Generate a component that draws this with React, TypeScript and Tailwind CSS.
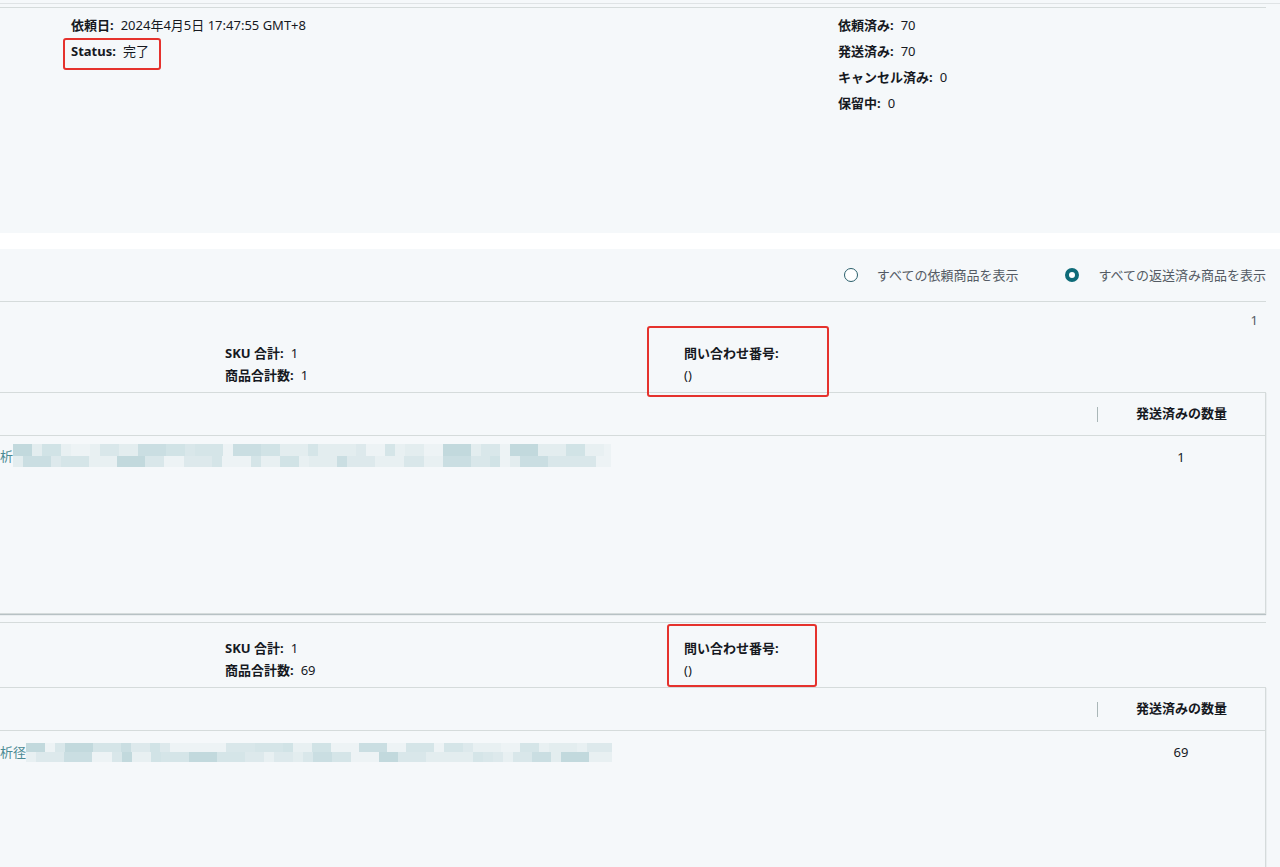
import React from "react";

const PALETTE = ["#d9e7ea", "#cadee2", "#e3edef", "#edf3f5", "#d1e3e6", "#c2d9dd", "#dde9ec", "#e8f0f2", "#d5e5e8"];

function seeded(seed: number) {
  let s = seed;
  return () => {
    s = (s * 9301 + 49297) % 233280;
    return s / 233280;
  };
}

type Cell = { w: number; c: string };

function makeRow(r: () => number, total: number): Cell[] {
  const cells: Cell[] = [];
  let used = 0;
  while (used < total) {
    let w = 10 + Math.floor(r() * 3) * 9;
    if (used + w > total) w = total - used;
    cells.push({ w, c: PALETTE[Math.floor(r() * PALETTE.length)] });
    used += w;
  }
  return cells;
}

function makeMosaic(seed: number, total: number) {
  const r = seeded(seed);
  return { top: makeRow(r, total), bottom: makeRow(r, total) };
}

const mosaic1 = makeMosaic(7, 598);
const mosaic2 = makeMosaic(31, 586);

function Mosaic({ data, lead, h }: { data: { top: Cell[]; bottom: Cell[] }; lead: string; h: number }) {
  return (
    <div className="flex items-center">
      <span className="text-[13px] leading-[20px] text-[#4a8a94] shrink-0">{lead}</span>
      <div className="flex flex-col">
        <div className="flex">
          {data.top.map((c, i) => (
            <div key={i} style={{ backgroundColor: c.c, height: h / 2, width: c.w }} />
          ))}
        </div>
        <div className="flex">
          {data.bottom.map((c, i) => (
            <div key={i} style={{ backgroundColor: c.c, height: h / 2, width: c.w }} />
          ))}
        </div>
      </div>
    </div>
  );
}

function Field({ label, value }: { label: string; value: string }) {
  return (
    <div className="whitespace-nowrap">
      <span className="font-bold">{label}:</span>
      <span className="ml-[7px]">{value}</span>
    </div>
  );
}

function RedBox({ className }: { className: string }) {
  return <div className={"absolute border-2 border-[#e5322d] rounded-[3px] pointer-events-none " + className} />;
}

function Radio({ checked, label }: { checked: boolean; label: string }) {
  return (
    <div className="flex items-center">
      {checked ? (
        <span className="w-[14px] h-[14px] rounded-full border-[4px] border-[#0e6b78] bg-white box-border" />
      ) : (
        <span className="w-[14px] h-[14px] rounded-full border-[1.5px] border-[#2a5f6b] bg-white box-border" />
      )}
      <span className="ml-[19px] text-[13px] text-[#545b64] leading-[20px]">{label}</span>
    </div>
  );
}

function TableCard({
  qty,
  mosaic,
  lead,
  heightClass,
  mosaicPad,
  mosaicH,
}: {
  qty: string;
  mosaic: { top: Cell[]; bottom: Cell[] };
  lead: string;
  heightClass: string;
  mosaicPad: string;
  mosaicH: number;
}) {
  return (
    <div className={"-ml-[10px] mr-[14px] border border-[#d5dbdb] bg-[#f5f8fa] shadow-[0_1px_1px_0_rgba(0,28,36,0.25)] " + heightClass}>
      <div className="flex h-[43px] border-b border-[#d5dbdb]">
        <div className="flex-1" />
        <div className="w-[168px] flex items-center">
          <div className="w-px h-[15px] bg-[#aab7b8]" />
          <div className="flex-1 text-center font-bold text-[13px] text-[#16191f]">発送済みの数量</div>
        </div>
      </div>
      <div className="flex">
        <div className={"flex-1 pl-[9px] " + mosaicPad}>
          <Mosaic data={mosaic} lead={lead} h={mosaicH} />
        </div>
        <div className="w-[168px] pt-[9px] leading-[24px] text-center text-[13px] text-[#16191f]">{qty}</div>
      </div>
    </div>
  );
}

export default function App() {
  return (
    <div
      className="h-[867px] w-[1280px] overflow-hidden bg-white text-[13px] text-[#16191f]"
      style={{ fontFamily: '"Noto Sans", "Noto Sans CJK JP", sans-serif' }}
    >
      {/* Top summary panel */}
      <div className="bg-[#f5f8fa] h-[233px]">
        <div className="h-[3px]" />
        <div className="h-px bg-[#dfe3e5]" />
        <div className="h-[3px]" />
        <div className="h-px bg-[#d5dbdb] mr-[14px]" />
        <div className="flex pt-[4px] leading-[26px]">
          <div className="ml-[71px] w-[767px]">
            <Field label="依頼日" value="2024年4月5日 17:47:55 GMT+8" />
            <div className="relative">
              <Field label="Status" value="完了" />
              <RedBox className="-left-[8px] top-0 w-[98px] h-[32px]" />
            </div>
          </div>
          <div>
            <Field label="依頼済み" value="70" />
            <Field label="発送済み" value="70" />
            <Field label="キャンセル済み" value="0" />
            <Field label="保留中" value="0" />
          </div>
        </div>
      </div>

      <div className="h-[16px] bg-white" />

      {/* Items panel */}
      <div className="bg-[#f5f8fa] h-[618px]">
        <div className="h-[52px] flex items-center justify-end pr-[14px] gap-[47px]">
          <Radio checked={false} label="すべての依頼商品を表示" />
          <Radio checked={true} label="すべての返送済み商品を表示" />
        </div>
        <div className="h-px bg-[#d5dbdb] mr-[14px]" />

        <div className="pt-[5px] pr-[22px] text-right leading-[26px] text-[#545b64]">1</div>

        {/* Block 1 */}
        <div className="mt-[9px] flex leading-[22px]">
          <div className="ml-[225px] w-[459px]">
            <Field label="SKU 合計" value="1" />
            <Field label="商品合計数" value="1" />
          </div>
          <div className="relative">
            <div className="font-bold">問い合わせ番号:</div>
            <div>()</div>
            <RedBox className="-left-[37px] -top-[16px] w-[182px] h-[71px]" />
          </div>
        </div>
        <div className="mt-[6px]">
          <TableCard qty="1" mosaic={mosaic1} lead="析" heightClass="h-[222px]" mosaicPad="pt-[8px]" mosaicH={23} />
        </div>

        <div className="mt-[8px] h-px bg-[#d5dbdb] mr-[14px]" />

        {/* Block 2 */}
        <div className="mt-[14px] flex leading-[22px]">
          <div className="ml-[225px] w-[459px]">
            <Field label="SKU 合計" value="1" />
            <Field label="商品合計数" value="69" />
          </div>
          <div className="relative">
            <div className="font-bold">問い合わせ番号:</div>
            <div>()</div>
            <RedBox className="-left-[17px] -top-[13px] w-[150px] h-[63px]" />
          </div>
        </div>
        <div className="mt-[6px]">
          <TableCard qty="69" mosaic={mosaic2} lead="析径" heightClass="h-[240px]" mosaicPad="pt-[11px]" mosaicH={19} />
        </div>
      </div>
    </div>
  );
}
